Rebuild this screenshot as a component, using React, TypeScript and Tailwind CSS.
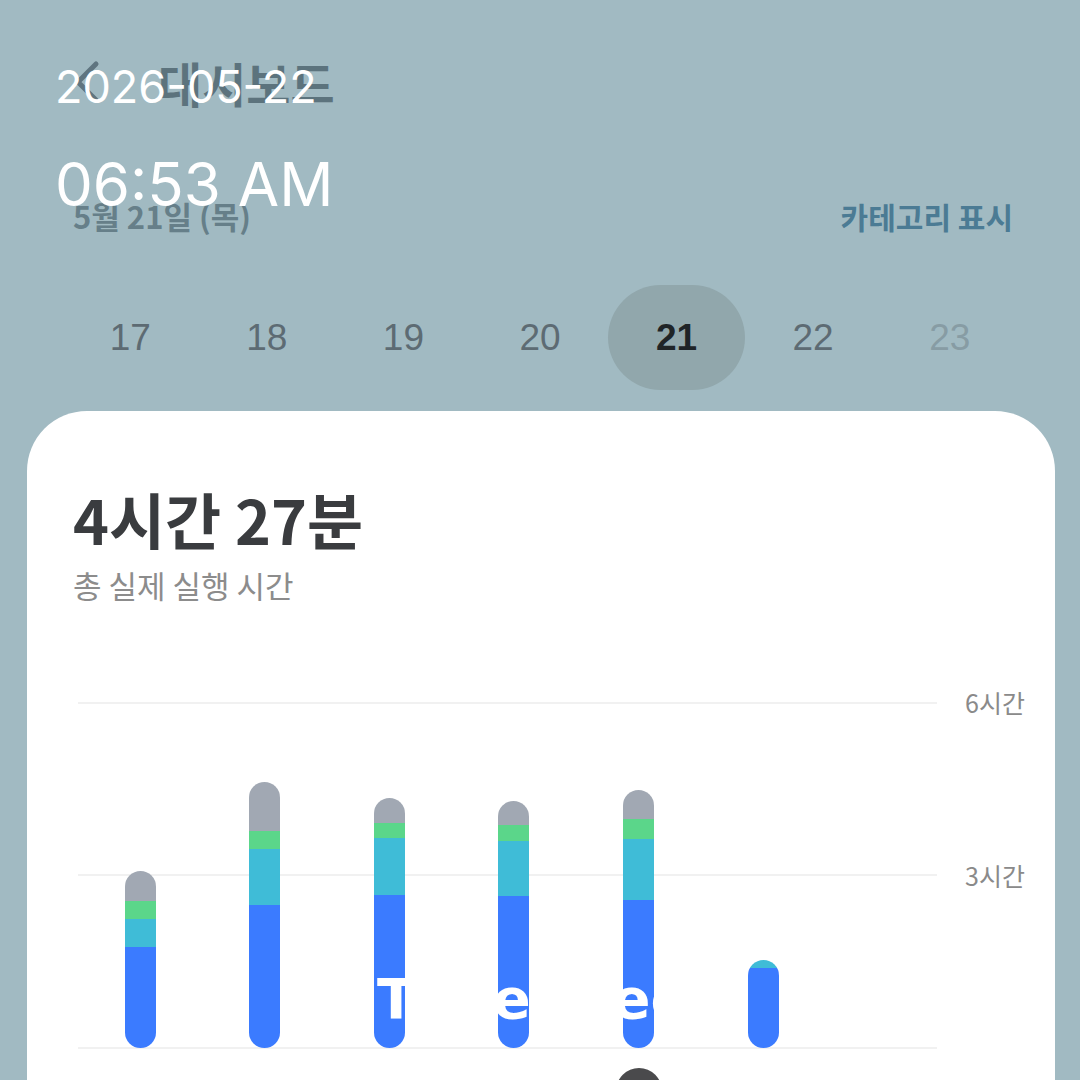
import React from 'react';

const kr = { fontFamily: '"Noto Sans CJK KR", "Noto Sans", sans-serif' };

type Bar = { gray: number; green: number; teal: number; blue: number };

const bars: Bar[] = [
  { gray: 30, green: 18, teal: 28, blue: 101 },
  { gray: 49, green: 18, teal: 56, blue: 143 },
  { gray: 25, green: 15, teal: 57, blue: 153 },
  { gray: 24, green: 16, teal: 55, blue: 152 },
  { gray: 29, green: 20, teal: 61, blue: 148 },
  { gray: 0, green: 0, teal: 8, blue: 80 },
  { gray: 0, green: 0, teal: 0, blue: 0 },
];

const days = ['17', '18', '19', '20', '21', '22', '23'];

function StackedBar({ bar }: { bar: Bar }) {
  const total = bar.gray + bar.green + bar.teal + bar.blue;
  if (!total) return <div className="h-0" />;
  return (
    <div className="flex w-[31px] flex-col overflow-hidden rounded-full">
      <div className="bg-[#a1a8b3]" style={{ height: bar.gray }} />
      <div className="bg-[#5bd68a]" style={{ height: bar.green }} />
      <div className="bg-[#3fbcd7]" style={{ height: bar.teal }} />
      <div className="bg-[#3b7bff]" style={{ height: bar.blue }} />
    </div>
  );
}

export default function App() {
  return (
    <div className="relative h-[1080px] w-[1080px] overflow-hidden bg-[#a1bac2]" style={kr}>
      {/* header */}
      <div className="mt-[52px] flex h-[60px] items-center pl-[72px]">
        <svg width="30" height="44" viewBox="0 0 30 44" fill="none" className="mr-[56px]">
          <path d="M24 4 L6 22 L24 40" stroke="#5f7580" strokeWidth="5" strokeLinecap="round" strokeLinejoin="round" />
        </svg>
        <h1 className="text-[48px] font-bold leading-none text-[#5c737d]">대시보드</h1>
      </div>

      <div className="mt-[84px] flex h-[40px] items-center justify-between pl-[73px] pr-[67px]">
        <span className="text-[31px] font-bold text-[#667f89]">5월 21일 (목)</span>
        <span className="text-[30px] font-bold text-[#4b7b94]">카테고리 표시</span>
      </div>

      {/* date picker */}
      <div className="ml-[62px] mt-[49px] grid h-[105px] w-[956px] grid-cols-7" style={{ fontFamily: '"Liberation Sans", Arial, sans-serif' }}>
        {days.map((d) => (
          <div key={d} className="flex items-center justify-center">
            {d === '21' ? (
              <div className="flex h-[105px] w-[137px] items-center justify-center rounded-full bg-[#91a7ac] text-[37px] font-bold text-[#1f2427]">
                {d}
              </div>
            ) : (
              <span className={d === '23' ? 'text-[37px] text-[#879ca4]' : 'text-[37px] text-[#5d6b73]'}>{d}</span>
            )}
          </div>
        ))}
      </div>

      {/* card */}
      <div className="ml-[27px] mt-[21px] h-[800px] w-[1028px] rounded-[60px] bg-white pt-[75px]">
        <div className="pl-[46px]">
          <div className="text-[61px] font-bold leading-[66px] text-[#3a3c3f]">4시간 27분</div>
          <div className="mt-[15px] text-[31px] leading-[36px] text-[#8c8c8c]">총 실제 실행 시간</div>
        </div>

        {/* chart */}
        <div className="relative ml-[51px] mt-[100px] h-[345px] w-[872px]">
          <div className="absolute left-0 top-[-1px] h-[2px] w-[859px] bg-[#f1f1f1]" />
          <div className="absolute left-0 top-[171px] h-[2px] w-[859px] bg-[#f1f1f1]" />
          <div className="absolute left-0 top-[344px] h-[2px] w-[859px] bg-[#f1f1f1]" />
          <span className="absolute left-[887px] top-[-16px] whitespace-nowrap text-[25px] leading-[30px] text-[#8a8a8a]">6시간</span>
          <span className="absolute left-[887px] top-[157px] whitespace-nowrap text-[25px] leading-[30px] text-[#8a8a8a]">3시간</span>

          <div className="relative grid h-full grid-cols-7 items-end">
            {bars.map((b, i) => (
              <div key={i} className="flex justify-center">
                <StackedBar bar={b} />
              </div>
            ))}
          </div>

          <span
            className="absolute left-[299px] top-[268px] whitespace-nowrap text-[56px] font-bold leading-[56px] text-white"
            style={{ fontFamily: '"DejaVu Sans", sans-serif' }}
          >
            Time Free
          </span>
        </div>

        {/* day markers */}
        <div className="ml-[51px] mt-[20px] grid w-[872px] grid-cols-7">
          {days.map((d, i) => (
            <div key={d} className="flex justify-center">
              {i === 4 && <div className="h-[46px] w-[46px] rounded-full bg-[#4a4a4c]" />}
            </div>
          ))}
        </div>
      </div>

      {/* clock overlay */}
      <div className="absolute left-[55px] top-[64px] flex flex-col text-white" style={{ fontFamily: 'Inter, sans-serif' }}>
        <span className="text-[45px] leading-[45px]">2026-05-22</span>
        <span className="mt-[45px] text-[60px] leading-[60px]">06:53 AM</span>
      </div>
    </div>
  );
}
